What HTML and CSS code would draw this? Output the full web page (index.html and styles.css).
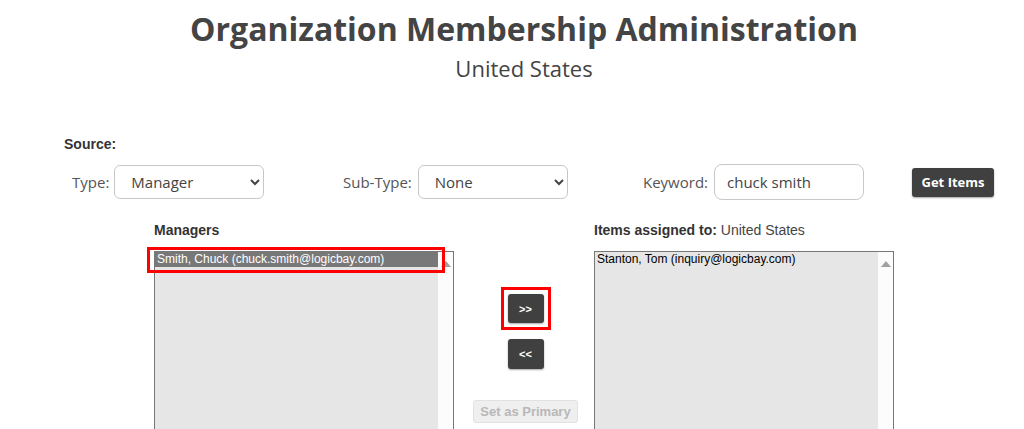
FILE: index.html
```html
<!DOCTYPE html>
<html lang="en">
<head>
  <meta charset="UTF-8">
  <title>Organization Membership Administration</title>
  <link rel="stylesheet" href="styles.css">
</head>
<body>
  <div class="page">
    <h1 class="title">Organization Membership Administration</h1>
    <div class="subtitle">United States</div>

    <div class="source-label">Source:</div>
    <div class="filters">
      <div class="field field-type">
        <label for="type">Type:</label>
        <select id="type" class="control">
          <option>Manager</option>
        </select>
      </div>
      <div class="field field-subtype">
        <label for="subtype">Sub-Type:</label>
        <select id="subtype" class="control">
          <option>None</option>
        </select>
      </div>
      <div class="field field-keyword">
        <label for="keyword">Keyword:</label>
        <input id="keyword" class="control keyword" type="text" value="chuck smith">
      </div>
      <button class="btn-dark get-items">Get Items</button>
    </div>

    <div class="columns">
      <div class="column">
        <div class="col-label"><b>Managers</b></div>
        <div class="listbox">
          <div class="list-items">
            <div class="list-row selected">Smith, Chuck (chuck.smith@logicbay.com)</div>
          </div>
          <div class="scrollbar"><span class="arrow-up"></span></div>
          <span class="highlight row-highlight"></span>
        </div>
      </div>

      <div class="middle">
        <span class="marked"><button class="btn-dark move">&gt;&gt;</button></span>
        <button class="btn-dark move">&lt;&lt;</button>
        <button class="btn-primary" disabled>Set as Primary</button>
      </div>

      <div class="column">
        <div class="col-label"><b>Items assigned to:</b> United States</div>
        <div class="listbox">
          <div class="list-items">
            <div class="list-row">Stanton, Tom (inquiry@logicbay.com)</div>
          </div>
          <div class="scrollbar"><span class="arrow-up"></span></div>
        </div>
      </div>
    </div>
  </div>
</body>
</html>
```

FILE: styles.css
```css
body {
  margin: 0;
  background: #fff;
  font-family: 'Open Sans', sans-serif;
  color: #444;
}

.page {
  padding-left: 24px;
}

.title {
  margin: 9px 0 0;
  font-size: 32px;
  line-height: 40px;
  font-weight: 700;
  text-align: center;
  color: #444;
}

.subtitle {
  margin-top: 5px;
  font-size: 22px;
  line-height: 28px;
  text-align: center;
  color: #444;
}

.source-label {
  margin: 54px 0 0 40px;
  font-family: 'Liberation Sans', Arial, sans-serif;
  font-size: 14px;
  line-height: 16px;
  font-weight: bold;
  color: #333;
}

.filters {
  display: flex;
  align-items: center;
  height: 36px;
  margin: 12px 0 0 48px;
}

.field {
  display: flex;
  align-items: center;
  gap: 6px;
  font-size: 15px;
  color: #555;
}

.field-type { width: 271px; gap: 5px; }
.field-subtype { width: 300px; }
.field-keyword { width: 269px; }

.control {
  box-sizing: border-box;
  width: 150px;
  height: 34px;
  border: 1px solid #c8c8c8;
  border-radius: 6px;
  background: #fff;
  font-family: 'Open Sans', sans-serif;
  font-size: 15px;
  color: #444;
  padding: 0 8px 0 12px;
}

.keyword {
  height: 36px;
  padding-left: 12px;
  border-radius: 8px;
}

.btn-dark {
  border: none;
  border-radius: 3px;
  background: #404040;
  color: #fff;
  box-shadow: 0 1px 2px rgba(0, 0, 0, 0.35);
  cursor: pointer;
}

.get-items {
  width: 82px;
  height: 29px;
  padding: 0;
  font-family: 'Open Sans', sans-serif;
  font-size: 13px;
  font-weight: 700;
}

.columns {
  display: flex;
  align-items: flex-start;
  margin: 22px 0 0 130px;
}

.column {
  width: 300px;
}

.col-label {
  font-family: 'Liberation Sans', Arial, sans-serif;
  font-size: 14px;
  line-height: 16px;
  color: #444;
}

.col-label b {
  color: #333;
}

.listbox {
  position: relative;
  box-sizing: border-box;
  display: flex;
  height: 178px;
  margin-top: 13px;
  border: 1px solid #777;
  border-bottom: none;
  font-family: 'Liberation Sans', Arial, sans-serif;
  font-size: 12px;
}

.list-items {
  flex: 1;
  background: #e6e6e6;
}

.list-row {
  height: 15px;
  line-height: 15px;
  padding-left: 2px;
  color: #000;
  white-space: nowrap;
}

.list-row.selected {
  background: #787878;
  color: #fff;
}

.scrollbar {
  width: 15px;
  background: #fcfcfc;
  display: flex;
  justify-content: center;
  padding-top: 9px;
  box-sizing: border-box;
}

.arrow-up {
  width: 0;
  height: 0;
  border-left: 5px solid transparent;
  border-right: 5px solid transparent;
  border-bottom: 6px solid #a0a0a0;
}

.highlight {
  position: absolute;
  border: 3px solid #f00;
  pointer-events: none;
}

.row-highlight {
  left: -8px;
  top: -5px;
  width: 292px;
  height: 20px;
}

.middle {
  width: 140px;
  display: flex;
  flex-direction: column;
  align-items: center;
  padding-top: 65px;
}

.marked {
  display: flex;
  margin-left: 3px;
  padding: 4px;
  border: 3px solid #f00;
}

.move {
  width: 36px;
  height: 29px;
  padding: 0;
  font-family: 'Liberation Sans', Arial, sans-serif;
  font-size: 11px;
  font-weight: bold;
}

.marked + .move {
  margin-top: 9px;
  margin-left: 3px;
  height: 30px;
}

.btn-primary {
  margin-top: 31px;
  margin-left: 3px;
  height: 23px;
  padding: 0 6px;
  border: 1px solid #e2e2e2;
  border-radius: 3px;
  background: #efefef;
  color: #b8b8b8;
  font-family: 'Liberation Sans', Arial, sans-serif;
  font-size: 13px;
  font-weight: bold;
}
```
